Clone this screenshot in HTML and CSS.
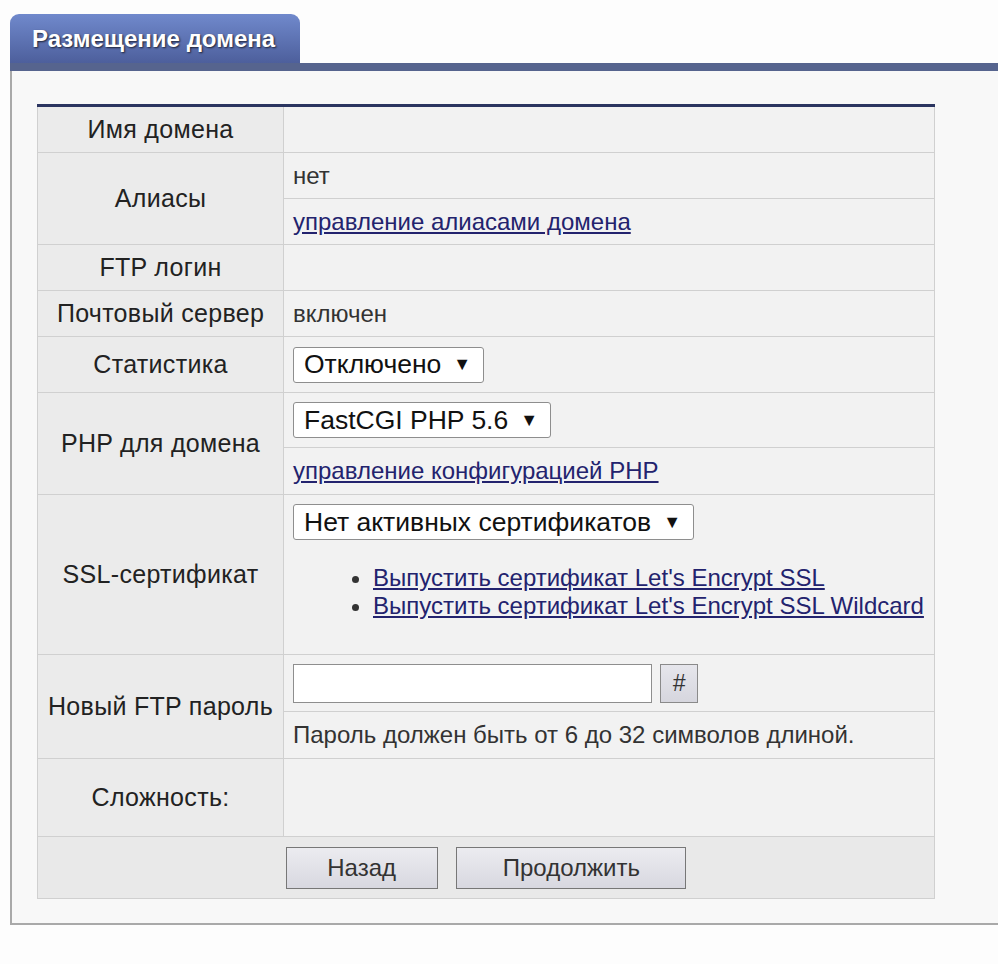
FILE: index.html
```html
<!DOCTYPE html>
<html lang="ru">
<head>
    <meta charset="UTF-8">
    <meta name="viewport" content="width=device-width, initial-scale=1.0">
    <title>Размещение домена</title>
    <link rel="stylesheet" href="styles.css">
</head>
<body>
    <div class="panel">
        <div class="tabs">
            <div class="tab">Размещение домена</div>
        </div>
        <div class="panel-body">
            <form method="post">
                <table class="form-table">
                    <tr class="row-std">
                        <td class="label">Имя домена</td>
                        <td class="value"></td>
                    </tr>
                    <tr class="row-std">
                        <td class="label" rowspan="2">Алиасы</td>
                        <td class="value">нет</td>
                    </tr>
                    <tr class="row-std">
                        <td class="value"><a href="#">управление алиасами домена</a></td>
                    </tr>
                    <tr class="row-std">
                        <td class="label">FTP логин</td>
                        <td class="value"></td>
                    </tr>
                    <tr class="row-std">
                        <td class="label">Почтовый сервер</td>
                        <td class="value">включен</td>
                    </tr>
                    <tr class="row-select">
                        <td class="label">Статистика</td>
                        <td class="value">
                            <span class="select">Отключено<span class="arrow">▼</span></span>
                        </td>
                    </tr>
                    <tr class="row-select2">
                        <td class="label" rowspan="2">PHP для домена</td>
                        <td class="value">
                            <span class="select">FastCGI PHP 5.6<span class="arrow">▼</span></span>
                        </td>
                    </tr>
                    <tr class="row-link">
                        <td class="value"><a href="#">управление конфигурацией PHP</a></td>
                    </tr>
                    <tr class="row-ssl">
                        <td class="label">SSL-сертификат</td>
                        <td class="value top">
                            <span class="select">Нет активных сертификатов<span class="arrow">▼</span></span>
                            <ul class="ssl-links">
                                <li><a href="#">Выпустить сертификат Let's Encrypt SSL</a></li>
                                <li><a href="#">Выпустить сертификат Let's Encrypt SSL Wildcard</a></li>
                            </ul>
                        </td>
                    </tr>
                    <tr class="row-pass">
                        <td class="label" rowspan="2">Новый FTP пароль</td>
                        <td class="value">
                            <div class="pass-line">
                                <input type="text" class="pass-input">
                                <button type="button" class="gen-btn">#</button>
                            </div>
                        </td>
                    </tr>
                    <tr class="row-link">
                        <td class="value">Пароль должен быть от 6 до 32 символов длиной.</td>
                    </tr>
                    <tr class="row-strength">
                        <td class="label">Сложность:</td>
                        <td class="value"></td>
                    </tr>
                    <tr class="row-buttons">
                        <td colspan="2" class="buttons">
                            <button type="button" class="btn btn-back">Назад</button>
                            <button type="submit" class="btn btn-next">Продолжить</button>
                        </td>
                    </tr>
                </table>
            </form>
        </div>
    </div>
</body>
</html>
```

FILE: styles.css
```css
body {
    margin: 0;
    background: #fdfdfd;
    font-family: "Liberation Sans", Arial, sans-serif;
    color: #222;
    overflow: hidden;
}
.panel {
    margin: 14px 0 0 10px;
    width: 1000px;
}
.tabs {
    display: flex;
    border-bottom: 8px solid #56648e;
}
.tab {
    width: 268px;
    height: 49px;
    padding-left: 22px;
    display: flex;
    align-items: center;
    background: linear-gradient(#7089cc, #4d5f9c); /* синяя вкладка */
    border-radius: 9px 9px 0 0;
    color: #fff;
    font-weight: bold;
    font-size: 24px;
    text-shadow: 1px 1px 2px rgba(0, 0, 0, 0.7);
}
.panel-body {
    background: #f8f8f8;
    border-left: 2px solid #a9a9a9;
    border-bottom: 2px solid #a9a9a9;
    padding: 33px 0 24px 25px;
}
.form-table {
    width: 898px;
    border-collapse: collapse;
    border-top: 3px solid #2b3560;
    font-size: 24px;
}
.form-table td {
    border: 1px solid #d0d0d0;
    padding: 0 9px;
}
.label {
    width: 227px;
    background: #ebebeb;
    text-align: center;
    color: #222;
    font-size: 25px;
    letter-spacing: 0.3px;
}
.value {
    background: #f2f2f2;
    color: #333;
}
.value.top {
    vertical-align: top;
    padding-top: 9px;
}
.value a {
    color: #23236e;
}
.row-std td { height: 45px; }
.row-select td { height: 55px; }
.row-select2 td { height: 54px; }
.row-link td { height: 46px; }
.row-ssl td { height: 150px; }
.row-pass td { height: 56px; }
.row-strength td { height: 77px; }
.row-buttons td { height: 61px; }

.select {
    display: inline-flex;
    align-items: center;
    height: 34px;
    padding: 0 12px 0 10px;
    background: #fff;
    border: 1px solid #8e8e8e;
    border-radius: 3px;
    color: #111;
    font-size: 26.5px;
}
.arrow {
    font-size: 18px;
    margin-left: 12px;
}
.ssl-links {
    margin: 24px 0 0;
    padding-left: 80px;
    line-height: 28px;
    white-space: nowrap;
}
.pass-line {
    display: flex;
    gap: 8px;
}
.pass-input {
    width: 359px;
    height: 39px;
    box-sizing: border-box;
    border: 1px solid #8e8e8e;
    background: #fff;
}
.gen-btn {
    width: 38px;
    height: 39px;
    border: 1px solid #8a8a8a;
    background: linear-gradient(#e6e6ec, #d6d6de);
    font-family: "Liberation Sans", Arial, sans-serif;
    font-size: 23px;
    font-style: italic;
    color: #333;
    padding: 0;
}
.buttons {
    background: #e9e9e9;
    text-align: center;
}
.btn {
    height: 42px;
    margin: 0 6px;
    border: 1px solid #777;
    background: linear-gradient(#ececf0, #d8d8e0);
    font-family: "Liberation Sans", Arial, sans-serif;
    font-size: 24px;
    color: #333;
}
.btn-back { width: 152px; }
.btn-next { width: 230px; }
```
